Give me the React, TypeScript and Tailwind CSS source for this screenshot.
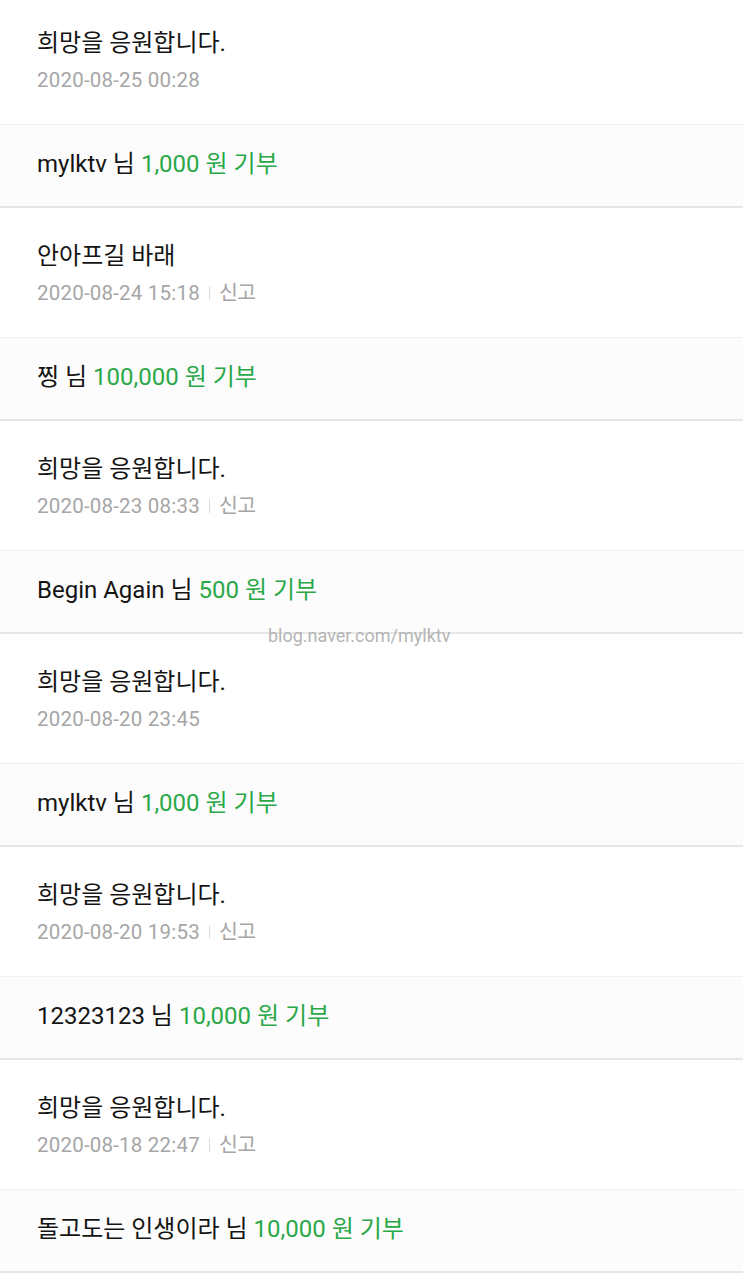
const font = { fontFamily: 'Roboto, "Noto Sans CJK KR", sans-serif' };

type Item = { msg: string; date: string; report: boolean; name: string; amount: string };

const items: Item[] = [
  { msg: "희망을 응원합니다.", date: "2020-08-25 00:28", report: false, name: "mylktv", amount: "1,000" },
  { msg: "안아프길 바래", date: "2020-08-24 15:18", report: true, name: "찡", amount: "100,000" },
  { msg: "희망을 응원합니다.", date: "2020-08-23 08:33", report: true, name: "Begin Again", amount: "500" },
  { msg: "희망을 응원합니다.", date: "2020-08-20 23:45", report: false, name: "mylktv", amount: "1,000" },
  { msg: "희망을 응원합니다.", date: "2020-08-20 19:53", report: true, name: "12323123", amount: "10,000" },
  { msg: "희망을 응원합니다.", date: "2020-08-18 22:47", report: true, name: "돌고도는 인생이라", amount: "10,000" },
];

function Comment({ item, first }: { item: Item; first: boolean }) {
  return (
    <div className={`flex flex-col border-b border-[#f0f0f0] bg-white px-[37px] pb-[32px] ${first ? "pt-[27px]" : "pt-[32px]"}`}>
      <p className="text-[24px] leading-[32px] text-[#141414]">{item.msg}</p>
      <div className="mt-[9px] flex items-center text-[20.5px] leading-[24px] tracking-[0.01em] text-[#a6a6a6]">
        <span>{item.date}</span>
        {item.report && (
          <>
            <span className="mx-[9px] h-[14px] w-px bg-[#dcdcdc]" />
            <span className="tracking-[-0.03em]">신고</span>
          </>
        )}
      </div>
    </div>
  );
}

function Donation({ item }: { item: Item }) {
  return (
    <div className="border-b-2 border-[#e6e6e6] bg-[#fcfcfc] px-[37px] pb-[26px] pt-[23px]">
      <p className="text-[24px] leading-[32px] text-[#141414]">
        {item.name} 님 <span className="text-[#2aa848]">{item.amount} 원 기부</span>
      </p>
    </div>
  );
}

export default function App() {
  return (
    <div className="relative h-[1275px] w-[743px] overflow-hidden bg-white" style={font}>
      {items.map((item, i) => (
        <div key={i}>
          <Comment item={item} first={i === 0} />
          <Donation item={item} />
        </div>
      ))}
      <span className="absolute left-[268px] top-[624px] text-[18px] leading-[24px] text-[#b4b4b4]">
        blog.naver.com/mylktv
      </span>
    </div>
  );
}
